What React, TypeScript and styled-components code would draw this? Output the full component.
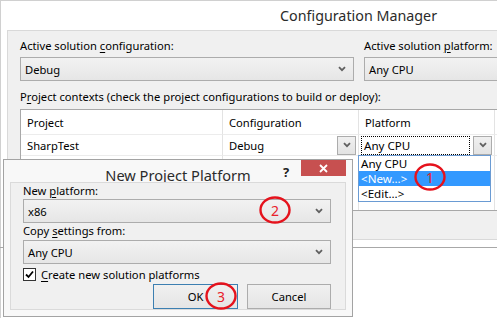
import React from "react";
import styled, { createGlobalStyle } from "styled-components";

const Global = createGlobalStyle`
  html, body { margin: 0; padding: 0; background: #ffffff; }
  body { font-family: "Noto Sans", "Open Sans", sans-serif; font-size: 11.2px; color: #000; }
  u { text-decoration: underline; text-underline-offset: 2px; }
`;

const Window = styled.div`
  position: relative;
  width: 497px;
  height: 318px;
  overflow: hidden;
  background: #ffffff;
  box-shadow: inset 1px 1px 0 #d0d0d0;
`;

const TitleBar = styled.div`
  height: 30px;
  padding-left: 280px;
  display: flex;
  align-items: center;
`;

const WindowTitle = styled.div`
  font-size: 14.3px;
  color: #2b2b2b;
  white-space: nowrap;
  margin-top: 1px;
`;

const Panel = styled.div`
  margin-left: 7px;
  width: 600px;
  height: 210px;
  box-sizing: border-box;
  background: #f0f0f0;
  border-top: 1px solid #d9d9d9;
  border-left: 1px solid #d9d9d9;
  border-bottom: 1px solid #d9d9d9;
  padding: 7px 0 0 12px;
  display: flex;
  flex-direction: column;
`;

const TopRow = styled.div`
  display: flex;
  gap: 10px;
`;

const Field = styled.div<{ $w: number }>`
  width: ${(p) => p.$w}px;
  display: flex;
  flex-direction: column;
`;

const Label = styled.div<{ $mb?: number }>`
  height: 15px;
  line-height: 15px;
  white-space: nowrap;
  margin-bottom: ${(p) => p.$mb ?? 4}px;
`;

const Combo = styled.div<{ $w?: number }>`
  box-sizing: border-box;
  height: 24px;
  width: ${(p) => (p.$w ? `${p.$w}px` : "100%")};
  border: 1px solid #acacac;
  background: linear-gradient(#f2f2f2, #e6e6e6);
  display: flex;
  align-items: center;
  padding: 0 7px 0 4px;
  justify-content: space-between;
  white-space: nowrap;
`;

const Chevron = () => (
  <svg width="8" height="6" viewBox="0 0 8 6">
    <path d="M1 1.2 L4 4.2 L7 1.2" fill="none" stroke="#606060" strokeWidth="1.8" />
  </svg>
);

const ProjectLabel = styled(Label)`
  margin-top: 8px;
  margin-bottom: 5px;
`;

const Table = styled.div`
  box-sizing: border-box;
  height: 102px;
  width: 560px;
  background: #ffffff;
  border: 1px solid #a8a8a8;
  display: grid;
  grid-template-columns: 202px 136px 136px 1fr;
  grid-template-rows: 25px 21px 1fr;
`;

const Cell = styled.div<{ $row?: boolean }>`
  box-sizing: border-box;
  border-right: 1px solid #e3e3e3;
  border-bottom: ${(p) => (p.$row ? "1px solid #ececec" : "none")};
  padding-left: 6px;
  display: flex;
  align-items: center;
  white-space: nowrap;
  position: relative;
`;

const EditCell = styled(Cell)`
  padding: 0 2px 0 2px;
  gap: 3px;
`;

const CellText = styled.div`
  flex: 1;
  padding-left: 4px;
`;

const FocusText = styled.div`
  flex: 1;
  box-sizing: border-box;
  height: 19px;
  border: 1px dotted #000;
  display: flex;
  align-items: center;
  padding-left: 2px;
  font-size: 11.6px;
`;

const DropButton = styled.div`
  box-sizing: border-box;
  width: 19px;
  height: 19px;
  border: 1px solid #acacac;
  background: linear-gradient(#f0f0f0, #e3e3e3);
  display: flex;
  align-items: center;
  justify-content: center;
`;

const BottomRule = styled.div`
  margin-top: 7px;
  border-top: 1px solid #a8a8a8;
`;

const DropList = styled.div`
  position: absolute;
  left: 358px;
  top: 155px;
  width: 133px;
  box-sizing: border-box;
  border: 1px solid #6a9bd3;
  background: #ffffff;
  display: flex;
  flex-direction: column;
  font-size: 11.6px;
`;

const DropItem = styled.div<{ $sel?: boolean }>`
  height: 15px;
  line-height: 15px;
  padding-left: 2px;
  background: ${(p) => (p.$sel ? "#3399ff" : "transparent")};
  color: ${(p) => (p.$sel ? "#ffffff" : "#000")};
`;

const Dialog = styled.div`
  position: absolute;
  left: 3px;
  top: 159px;
  width: 350px;
  height: 158px;
  box-sizing: border-box;
  background: #f8f8f8;
  border: 1px solid #a3a3a3;
  display: flex;
  flex-direction: column;
  padding: 0 6px 6px 6px;
`;

const DialogBar = styled.div`
  height: 23px;
  position: relative;
  overflow: hidden;
  display: flex;
  justify-content: center;
`;

const DialogTitle = styled.div`
  font-size: 14.6px;
  line-height: 15px;
  color: #2b2b2b;
  margin-top: 8px;
  white-space: nowrap;
`;

const HelpMark = styled.div`
  position: absolute;
  left: 273px;
  top: 3px;
  font-size: 13px;
  font-weight: bold;
  color: #222;
`;

const CloseButton = styled.div`
  position: absolute;
  right: 0;
  top: 0;
  width: 45px;
  height: 16px;
  background: #c75050;
  display: flex;
  align-items: center;
  justify-content: center;
`;

const DialogBody = styled.div`
  flex: 1;
  box-sizing: border-box;
  background: #f0f0f0;
  border: 1px solid #dadada;
  padding: 0 14px 0 12px;
  display: flex;
  flex-direction: column;
`;

const CheckRow = styled.div`
  margin-top: 4px;
  height: 13px;
  display: flex;
  align-items: center;
  gap: 5px;
  white-space: nowrap;
`;

const CheckBox = styled.div`
  box-sizing: border-box;
  width: 13px;
  height: 13px;
  border: 1px solid #333;
  background: #fff;
  display: flex;
  align-items: center;
  justify-content: center;
`;

const ButtonRow = styled.div`
  margin-top: 3px;
  display: flex;
  justify-content: flex-end;
  gap: 9px;
`;

const Button = styled.div<{ $default?: boolean; $w: number }>`
  box-sizing: border-box;
  width: ${(p) => p.$w}px;
  height: 25px;
  border: 1px solid ${(p) => (p.$default ? "#3c7fb1" : "#acacac")};
  background: linear-gradient(#f0f0f0, #e5e5e5);
  display: flex;
  align-items: center;
  justify-content: center;
`;

const Marker = styled.div<{ $x: number; $y: number }>`
  position: absolute;
  left: ${(p) => p.$x}px;
  top: ${(p) => p.$y}px;
  width: 32px;
  height: 28px;
  display: flex;
  align-items: center;
  justify-content: center;
  color: #e8202a;
  font-size: 14px;
`;

const Ring = styled.svg`
  position: absolute;
  inset: 0;
`;

const Annotation = ({ x, y, n }: { x: number; y: number; n: string }) => (
  <Marker $x={x} $y={y}>
    <Ring width="32" height="28" viewBox="0 0 32 28">
      <ellipse cx="16" cy="14" rx="14.5" ry="12.5" fill="none" stroke="#e5121c" strokeWidth="2.4" />
    </Ring>
    <span>{n}</span>
  </Marker>
);

export default function App() {
  return (
    <>
      <Global />
      <Window>
        <TitleBar>
          <WindowTitle>Configuration Manager</WindowTitle>
        </TitleBar>
        <Panel>
          <TopRow>
            <Field $w={334}>
              <Label>
                Active solution <u>c</u>onfiguration:
              </Label>
              <Combo>
                <span>Debug</span>
                <Chevron />
              </Combo>
            </Field>
            <Field $w={200}>
              <Label>
                Active solution <u>p</u>latform:
              </Label>
              <Combo>
                <span>Any CPU</span>
                <Chevron />
              </Combo>
            </Field>
          </TopRow>
          <ProjectLabel>
            P<u>r</u>oject contexts (check the project configurations to build or deploy):
          </ProjectLabel>
          <Table>
            <Cell $row>Project</Cell>
            <Cell $row>Configuration</Cell>
            <Cell $row>Platform</Cell>
            <Cell $row />
            <Cell $row>SharpTest</Cell>
            <EditCell $row>
              <CellText>Debug</CellText>
              <DropButton>
                <Chevron />
              </DropButton>
            </EditCell>
            <EditCell $row>
              <FocusText>Any CPU</FocusText>
              <DropButton>
                <Chevron />
              </DropButton>
            </EditCell>
            <Cell $row />
            <Cell />
            <Cell />
            <Cell />
            <Cell />
          </Table>
        </Panel>
        <BottomRule />

        <DropList>
          <DropItem>Any CPU</DropItem>
          <DropItem $sel>&lt;New...&gt;</DropItem>
          <DropItem>&lt;Edit...&gt;</DropItem>
        </DropList>

        <Dialog>
          <DialogBar>
            <DialogTitle>New Project Platform</DialogTitle>
            <HelpMark>?</HelpMark>
            <CloseButton>
              <svg width="9" height="9" viewBox="0 0 9 9">
                <path d="M1 1 L8 8 M8 1 L1 8" stroke="#fff" strokeWidth="1.8" />
              </svg>
            </CloseButton>
          </DialogBar>
          <DialogBody>
            <Label $mb={1}>
              New <u>p</u>latform:
            </Label>
            <Combo>
              <span>x86</span>
              <Chevron />
            </Combo>
            <Label $mb={2}>
              Copy <u>s</u>ettings from:
            </Label>
            <Combo>
              <span>Any CPU</span>
              <Chevron />
            </Combo>
            <CheckRow>
              <CheckBox>
                <svg width="9" height="9" viewBox="0 0 9 9">
                  <path d="M1 4.5 L3.5 7 L8 1.5" fill="none" stroke="#000" strokeWidth="1.8" />
                </svg>
              </CheckBox>
              <span>
                <u>C</u>reate new solution platforms
              </span>
            </CheckRow>
            <ButtonRow>
              <Button $default $w={85}>OK</Button>
              <Button $w={84}>Cancel</Button>
            </ButtonRow>
          </DialogBody>
        </Dialog>

        <Annotation x={414} y={163} n="1" />
        <Annotation x={259} y={196} n="2" />
        <Annotation x={205} y={282} n="3" />
      </Window>
    </>
  );
}
